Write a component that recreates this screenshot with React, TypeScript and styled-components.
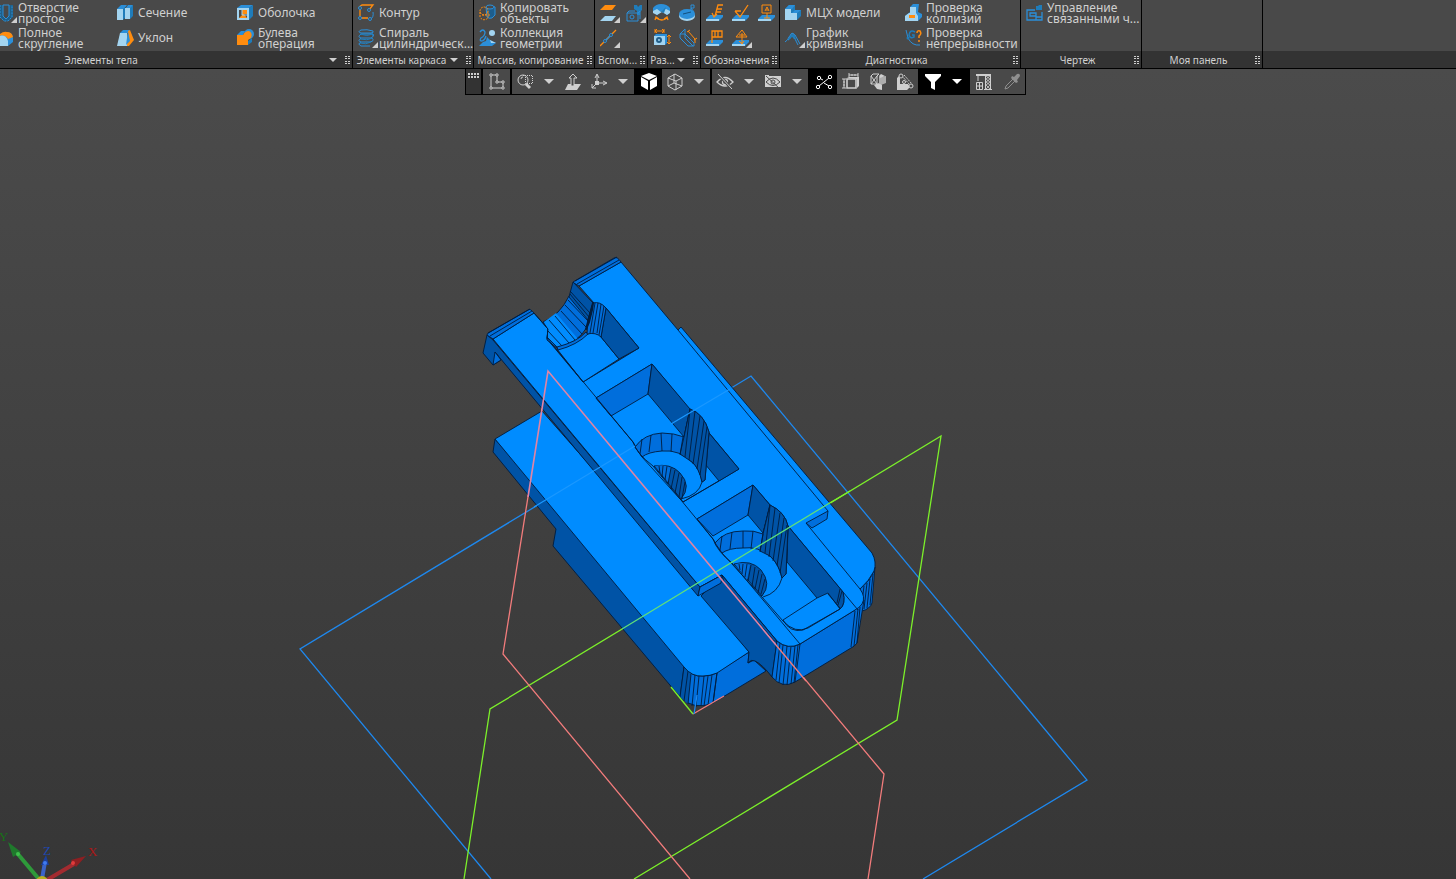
import React from "react";
import styled, { createGlobalStyle } from "styled-components";

const ORANGE = "#ff8c0f";
const BLUE = "#2b8fd9";
const DEEP = "#1f7cba";
const PALE = "#a3d4f0";
const LIGHT = "#cfcfcf";

const GlobalStyle = createGlobalStyle`
  *, *::before, *::after { box-sizing: border-box; }
  body {
    margin: 0;
    background: #383838;
    color: #d0d0d0;
    font-family: "Noto Sans", "Open Sans", sans-serif;
  }
  button { font: inherit; color: inherit; border: 0; padding: 0; background: none; }
  svg { display: block; }
`;

const Shell = styled.div`
  display: flex;
  flex-direction: column;
  min-height: 100vh;
  overflow: hidden;
`;

const Ribbon = styled.header`
  display: flex;
  background: linear-gradient(#494949 51px, #333333 51px);
  border-bottom: 1px solid #000;
`;

const Panel = styled.section<{ $width: number }>`
  display: flex;
  flex-direction: column;
  flex: none;
  width: ${(p) => p.$width}px;
  border-right: 1px solid #000;
  overflow: hidden;
`;

const Commands = styled.div<{ $columns: string; $alignEnd?: boolean }>`
  display: grid;
  grid-template-columns: ${(p) => p.$columns};
  grid-template-rows: 25px 25px;
  justify-content: ${(p) => (p.$alignEnd ? "end" : "start")};
  height: 51px;
  padding-left: ${(p) => (p.$alignEnd ? 0 : 5)}px;
`;

const Command = styled.button`
  display: flex;
  align-items: center;
  gap: 1px;
  min-width: 0;
  text-align: left;
  font-size: 12px;
  line-height: 11px;
  white-space: pre;
`;

const CommandIcon = styled.svg`
  flex: none;
  width: 20px;
  height: 20px;
`;

const PanelFooter = styled.footer`
  display: flex;
  align-items: center;
  height: 17px;
  padding-right: 2px;
`;

const PanelTitle = styled.span<{ $inset?: number }>`
  flex: 1;
  padding-top: 2px;
  padding-right: ${(p) => p.$inset ?? 0}px;
  text-align: center;
  font-size: 10px;
  line-height: 15px;
  white-space: nowrap;
`;

const Expand = styled.button`
  display: grid;
  place-items: center start;
  width: 16px;
  height: 17px;
`;

const FooterGrip = styled.svg`
  flex: none;
  width: 5px;
  height: 8px;
`;

const Viewport = styled.main`
  display: grid;
  flex: 1;
  background: linear-gradient(#4b4b4b, #363636);
`;

const Scene = styled.svg`
  grid-area: 1 / 1;
  width: 100%;
  height: calc(100vh - 69px);
`;

const Toolbar = styled.div`
  grid-area: 1 / 1;
  justify-self: center;
  align-self: start;
  display: flex;
  gap: 2px;
  margin-left: 35px;
  padding: 0 1px 1px;
  background: #000;
  z-index: 1;
`;

const Group = styled.div`
  display: flex;
  background: #494949;
`;

const Handle = styled.div`
  width: 15px;
  padding: 4px 2px;
  background: #333;
`;

const Tool = styled.button<{ $width?: number; $active?: boolean }>`
  display: grid;
  place-items: center;
  width: ${(p) => p.$width ?? 26}px;
  height: 25px;
  background: ${(p) => (p.$active ? "#000" : "transparent")};
  color: ${(p) => (p.$active ? "#fff" : LIGHT)};
`;

const Gizmo = styled.svg`
  grid-area: 1 / 1;
  align-self: end;
  justify-self: start;
  width: 110px;
  height: 59px;
  font: 13px "Liberation Serif", serif;
`;

const Corner = () => <path d="M14 20L20 14V20z" fill={LIGHT} />;

const Slab = () => (
  <>
    <path d="M0 18V16L4 12H17V14L13 18z" fill={BLUE} />
    <path d="M0 18V16H13V18z" fill={PALE} />
  </>
);

const icons: Record<string, React.ReactNode> = {
  hole: (
    <>
      <path d="M2 2H16V14L12 18H7L2 14z" fill="#1f5f88" />
      <path d="M6 2H12V13L9 16L6 13z" fill="#494949" stroke={BLUE} />
      <path d="M3 2V14L7 18H11L15 14V2" stroke={BLUE} fill="none" strokeDasharray="2 1" />
      <Corner />
    </>
  ),
  fullRound: (
    <>
      <path d="M2 9L9 4Q15 4 16 10V14L11 18H2z" fill={BLUE} />
      <path d="M2 7Q6 3 10 4Q15 4 16 9L11 11Q8 6 2 8z" fill={ORANGE} />
      <path d="M2 8Q9 6 11 13V18H2z" fill={PALE} />
    </>
  ),
  section: (
    <>
      <path d="M0 6L4 2H10L7 6zM8 6L11 2H16L14 6z" fill={BLUE} />
      <path d="M0 6H6V17H0zM8 5H13V16H8z" fill={PALE} />
      <path d="M6 6L8 4V15L6 17zM13 5L16 2V13L13 16z" fill={DEEP} />
    </>
  ),
  draft: (
    <>
      <path d="M3 5L6 2H13L11 5z" fill={BLUE} />
      <path d="M3 5H10L11 18H0z" fill={PALE} />
      <path d="M11 3L13 2L17 12L12 18H10z" fill={ORANGE} />
      <path d="M11 3L9 17L13 13z" fill={BLUE} />
    </>
  ),
  shell: (
    <>
      <path d="M0 5L4 2H16L12 5z" fill={BLUE} />
      <path d="M12 5L16 2V13L12 17z" fill={DEEP} />
      <path d="M0 5H12V17H0z" fill={PALE} />
      <path d="M2 7H10V15H2z" fill={ORANGE} />
      <path d="M2 7H5V12L2 15zM7 11H10V15z" fill="#494949" />
      <path d="M5 7V12H10" fill="none" stroke={PALE} />
    </>
  ),
  boolean: (
    <>
      <path d="M0 7L4 3H8L6 7z" fill={BLUE} />
      <circle cx="12" cy="6" r="5" fill={BLUE} />
      <path d="M0 7H6Q8 3 12 3Q16 5 14 10L11 12V17H0z" fill={ORANGE} />
      <path d="M11 13L15 10V14L11 17z" fill={DEEP} />
    </>
  ),
  contour: (
    <>
      <path d="M1 4L4 2H15L11 7M2 4V15H10" fill="none" stroke={ORANGE} strokeWidth="1.3" />
      <path d="M12 16Q16 15 15 9" fill="none" stroke={BLUE} />
      <g fill="#494949" stroke={BLUE}>
        <circle cx="2" cy="5" r="1.5" /><circle cx="11" cy="7" r="1.5" /><circle cx="2" cy="15" r="1.5" /><circle cx="12" cy="16" r="1.5" />
      </g>
    </>
  ),
  spiral: (
    <>
      <path d="M15 3Q9 1 3 2Q-1 4 3 5H13M15 8Q17 5 11 6H3Q-1 9 3 10H13Q17 8 14 6M3 10Q-1 13 3 14H12Q17 13 14 10M3 14Q-1 16 3 18H12M15 3Q16 5 13 5" fill="none" stroke={BLUE} />
      <path d="M2 6Q9 9 15 6M2 11Q9 13 15 10M2 15Q8 17 13 14" fill="none" stroke={DEEP} />
      <Corner />
    </>
  ),
  copyObjects: (
    <>
      <path d="M7 4Q11 1 16 4V12L13 15Q10 16 8 14z" fill="#1d5e8e" stroke={BLUE} />
      <ellipse cx="11" cy="4" rx="4" ry="2" fill="#494949" stroke={BLUE} />
      <circle cx="5" cy="8" r="4" fill="none" stroke={ORANGE} strokeDasharray="2 1" />
      <path d="M1 9V14Q4 19 9 15V8M3 12H11" fill="none" stroke={ORANGE} strokeDasharray="2 1" />
    </>
  ),
  collection: (
    <>
      <path d="M1 4Q4 0 6 4Q6 8 2 10Q0 13 3 13Q6 12 7 8" fill="none" stroke={BLUE} strokeWidth="1.3" />
      <circle cx="13" cy="5" r="3" fill={PALE} />
      <path d="M8 9L11 12L17 15L13 18H0L4 14L7 13z" fill={BLUE} />
      <path d="M11 12L17 15H12z" fill={PALE} />
    </>
  ),
  plane: (
    <>
      <path d="M5 2H16L12 7H0z" fill={ORANGE} />
      <path d="M5 13H16L12 18H0z" fill={PALE} />
      <Corner />
    </>
  ),
  component: (
    <>
      <path d="M8 2H11L12 4L14 2H16V7L14 9V12H11V8L8 6z" fill={DEEP} />
      <path d="M1 10H12V18H1zM1 10L3 8H9M12 10L14 8V16" fill="none" stroke={BLUE} />
      <circle cx="6" cy="14" r="2" fill="none" stroke={BLUE} />
      <Corner />
    </>
  ),
  axis: (
    <>
      <path d="M0 18L16 2" stroke={ORANGE} strokeWidth="1.3" />
      <path d="M5 13L11 7" stroke={BLUE} strokeWidth="1.3" />
      <circle cx="5" cy="13" r="1.5" fill="#494949" stroke={BLUE} />
      <circle cx="11" cy="7" r="1.5" fill="#494949" stroke={BLUE} />
      <Corner />
    </>
  ),
  angleSize: (
    <>
      <path d="M0 9V5Q3 1 8 1Q14 1 17 5V9L14 12L9 8L4 12z" fill={BLUE} />
      <path d="M0 8L4 6L8 9L13 6L17 8V10L14 12L9 9L4 12L0 10z" fill={PALE} />
      <path d="M8 9L13 4L11 10z" fill={DEEP} />
      <path d="M3 15Q9 19 14 15M2 17L3 14L6 16M15 17L14 14L11 16" fill="none" stroke={ORANGE} strokeWidth="1.3" />
    </>
  ),
  diskSize: (
    <>
      <ellipse cx="8" cy="13" rx="8" ry="5" fill={PALE} />
      <ellipse cx="8" cy="11" rx="8" ry="5" fill={BLUE} />
      <path d="M12 10V2H15V5H12L15 9" fill="none" stroke={BLUE} />
      <path d="M4 11L12 9" stroke="#124f7d" />
    </>
  ),
  linearSize: (
    <>
      <path d="M1 8H12V17H1z" fill={PALE} /><path d="M1 8L3 6H14V15L12 17V8z" fill={BLUE} />
      <circle cx="6" cy="12" r="3" fill="#225f8a" />
      <circle cx="6" cy="12" r="1" fill={PALE} />
      <path d="M2 3H11M2 1V5M11 1V5M4 1L2 3L4 5M9 1L11 3L9 5M16 7V16M14 9L16 7L18 9M14 14L16 16L18 14" fill="none" stroke={ORANGE} />
    </>
  ),
  chainSize: (
    <>
      <path d="M1 6H6L15 15V18H9L1 10zM6 6V10L14 18M1 6L6 1V6" fill="none" stroke={BLUE} />
      <path d="M9 3L16 11V15M8 4L11 2M15 12L18 10" fill="none" stroke={ORANGE} />
    </>
  ),
  base: (<><Slab /><path d="M17 2H12L9 13M11 6H16M10 9H15M6 10L8 14L11 11" fill="none" stroke={ORANGE} strokeWidth="1.3" /></>),
  roughness: (<><Slab /><path d="M3 8L8 14L16 2M3 8H9" fill="none" stroke={ORANGE} strokeWidth="1.3" /></>),
  datum: (<><Slab /><path d="M4 2H13V10H4zM9 10V15M6 15H12M7 8L9 4L11 8M8 7H10" fill="none" stroke={ORANGE} /></>),
  tolerance: (<><Slab /><path d="M6 15V3H16V9H6M9 3V9M12 3V9" fill="none" stroke={ORANGE} strokeWidth="1.3" /></>),
  mark: (<><Slab /><path d="M10 2L15 9H4zM10 5V15M7 13L10 16L12 13M7 7H13" fill="none" stroke={ORANGE} /><Corner /></>),
  mass: (
    <>
      <path d="M0 6L4 2H10V7H16V13L12 17H0z" fill={DEEP} />
      <path d="M0 6L4 2H10L7 6zM7 10L10 7H16L12 10z" fill={BLUE} />
      <path d="M0 6H6V10H12V17H0z" fill={PALE} />
    </>
  ),
  curvature: (
    <>
      <path d="M0 14Q3 12 4 9L7 5L10 7L15 16M3 12L7 8L10 11L13 17M4 9L5 11M6 6V9M8 5V9M10 7L9 11" fill="none" stroke={BLUE} />
      <path d="M4 10L7 6L10 8L12 14L10 11L7 9L3 13z" fill={DEEP} />
      <Corner />
    </>
  ),
  collision: (
    <>
      <path d="M5 4L8 1H14L13 9L17 11V14L13 18H0V13L5 9z" fill={BLUE} />
      <path d="M5 4H11V10H5zM0 13L4 10H11L13 13V18H0z" fill={PALE} />
      <path d="M4 12H10V15H4z" fill={ORANGE} />
    </>
  ),
  continuity: (
    <>
      <path d="M1 2L3 10Q7 18 15 17" fill="none" stroke={BLUE} />
      <path d="M10 4Q5 1 4 7Q5 11 9 9V7H7" fill="none" stroke={DEEP} strokeWidth="1.5" />
      <path d="M12 5Q12 2 15 3Q17 6 14 8V10M14 12V14" fill="none" stroke={ORANGE} strokeWidth="1.5" />
      <circle cx="3" cy="10" r="1.5" fill={DEEP} />
    </>
  ),
  drawing: (
    <>
      <path d="M9 7H1V17H16V9M4 10H10V13H4zM10 17V14H16" fill="none" stroke={BLUE} strokeWidth="1.3" />
      <path d="M10 3H12L13 2H16V7H10z" fill={DEEP} />
    </>
  ),
};

const tools: Record<string, React.ReactNode> = {
  sketch: (
    <>
      <path d="M4 3H10V10H16V16H4z" fill="none" stroke="currentColor" />
      <g fill="#494949" stroke="currentColor"><circle cx="4" cy="3" r="1.2" /><circle cx="10" cy="3" r="1.2" /><circle cx="10" cy="10" r="1.2" /><circle cx="16" cy="10" r="1.2" /><circle cx="4" cy="16" r="1.2" /><circle cx="16" cy="16" r="1.2" /></g>
    </>
  ),
  zoom: (
    <>
      <circle cx="8" cy="8" r="5" fill="none" stroke="currentColor" />
      <path d="M11 12L15 16" stroke="currentColor" strokeWidth="3" />
      <path d="M8 3.5H17.5V11.5H10.5V3" fill="none" stroke="currentColor" strokeDasharray="1 1" />
      <path d="M6 7Q6 5 8 5" fill="none" stroke="currentColor" />
    </>
  ),
  orient: (<><path d="M5 12H18L14 18H2z" fill="currentColor" /><path d="M10 2L14 6H11V14H8V6H6z" fill="#494949" stroke="currentColor" /></>),
  axes: (<><path d="M8 10V3M8 11H17M8 11L3 16M6 6L8 2L10 6M14 9L18 11L14 13M3 12V16H7" fill="none" stroke="currentColor" /><rect x="6" y="9" width="4" height="4" fill="currentColor" /></>),
  solid: (<><path d="M10 1L18 4L10 8L2 4z" fill="#fff" /><path d="M2 5L9 9V18L2 14zM18 5L11 9V18L18 14z" fill="#fff" /></>),
  wire: (<path d="M10 2L17 6V14L10 18L3 14V6zM3 6L11 9L17 6M11 9V18M9 2V11L3 14M9 11L17 14" fill="none" stroke="currentColor" />),
  hide: (
    <>
      <path d="M2 10Q10 1 18 10Q10 18 2 10z" fill="none" stroke="currentColor" strokeWidth="1.3" />
      <circle cx="10" cy="10" r="2.5" fill="none" stroke="currentColor" strokeWidth="1.3" />
      <path d="M3 2L17 17" stroke="#494949" strokeWidth="3" /><path d="M3 2L17 17" stroke="currentColor" />
    </>
  ),
  hideAll: (
    <>
      <path d="M2 4V3H6V4H18V15H2z" fill="currentColor" />
      <path d="M3 10Q10 2 17 10Q10 17 3 10z" fill="currentColor" stroke="#494949" />
      <circle cx="10" cy="10" r="2" fill="none" stroke="#494949" />
      <path d="M3 4L17 17" stroke="#494949" />
    </>
  ),
  points: (
    <>
      <path d="M5 14L15 6M7 7L9 8M10 11L15 14" fill="none" stroke="currentColor" />
      <g fill="#000" stroke="currentColor"><circle cx="5" cy="6" r="1.7" /><circle cx="4" cy="15" r="1.7" /><circle cx="16" cy="5" r="1.7" /><circle cx="16" cy="15" r="1.7" /></g>
    </>
  ),
  dims: (<><path d="M6 7H15V16H6z" fill="none" stroke="currentColor" strokeWidth="1.6" /><path d="M8 5V1M17 5V1M8 3H17M11 2V4M14 2V4M5 7H1M5 16H1M3 7V16M2 10H4M2 13H4" fill="none" stroke="currentColor" /><path d="M6 6L8 5H18V14L16 16V7z" fill="currentColor" /></>),
  surfaces: (
    <>
      <path d="M3 4L5 2H11L9 4V12H3zM3 12L9 4M9 12L3 4" fill="none" stroke="currentColor" />
      <path d="M11 5L18 4V11L13 13L11 11z" fill="currentColor" opacity=".75" />
      <path d="M6 13L11 11L14 13V18L9 17z" fill="currentColor" />
      <path d="M11 4L13 2L17 4L12 6z" fill="currentColor" />
    </>
  ),
  threads: (
    <>
      <path d="M2 6L5 3V12H13L15 15L12 18H2z" fill="currentColor" />
      <path d="M7 4L15 13M9 3L17 12" fill="none" stroke="currentColor" strokeDasharray="2 1" />
      <circle cx="6" cy="4" r="2" fill="#494949" stroke="currentColor" />
      <circle cx="16" cy="14" r="2" fill="#494949" stroke="currentColor" />
      <circle cx="9" cy="10" r="1.5" fill="#494949" stroke="currentColor" />
    </>
  ),
  filter: (<path d="M2 2H18V4L12 10V18L8 16V10L2 4z" fill="#fff" />),
  crane: (
    <>
      <path d="M2 2H17V4H2zM11 4H12V17H11zM16 4H17V17H16zM10 17H18V18H10z" fill="currentColor" />
      <path d="M4 4V9M2.5 10.5H8.5V17.5H2.5zM5.5 10V18M2 14H9" fill="none" stroke="currentColor" />
      <path d="M12 4L16 7L12 10L16 13L12 17M16 4L12 7L16 10L12 13L16 17" fill="none" stroke="currentColor" strokeWidth="0.8" />
    </>
  ),
  dropper: (<><path d="M12 5L15 2Q18 1 18 4L15 8L16 10L14 11L9 6L10 4z" fill="#8f8f8f" /><path d="M11 7L4 14L3 17L6 16L13 9" fill="none" stroke="#8f8f8f" /></>),
};

const Caret = () => (
  <svg width="10" height="5" viewBox="0 0 10 5" aria-hidden="true"><path d="M0 0H10L5 5z" fill="currentColor" /></svg>
);

type Item = { icon: string; label?: string; name?: string };

const Cmd = ({ icon, label, name }: Item) => (
  <Command type="button" aria-label={name}>
    <CommandIcon viewBox="0 0 20 20" aria-hidden="true">{icons[icon]}</CommandIcon>
    {label && <span>{label}</span>}
  </Command>
);

type PanelData = {
  title: string; width: number; columns: string; items: Item[];
  expand?: boolean; alignEnd?: boolean; inset?: number;
};

const panels: PanelData[] = [
  {
    title: "Элементы тела", width: 353, columns: "120px 120px 115px", alignEnd: true, expand: true, inset: 127,
    items: [
      { icon: "hole", label: "Отверстие\nпростое" }, { icon: "section", label: "Сечение" }, { icon: "shell", label: "Оболочка" },
      { icon: "fullRound", label: "Полное\nскругление" }, { icon: "draft", label: "Уклон" }, { icon: "boolean", label: "Булева\nоперация" },
    ],
  },
  {
    title: "Элементы каркаса", width: 121, columns: "115px", expand: true,
    items: [{ icon: "contour", label: "Контур" }, { icon: "spiral", label: "Спираль\nцилиндрическ..." }],
  },
  {
    title: "Массив, копирование", width: 121, columns: "115px",
    items: [{ icon: "copyObjects", label: "Копировать\nобъекты" }, { icon: "collection", label: "Коллекция\nгеометрии" }],
  },
  {
    title: "Вспом...", width: 53, columns: "26px 21px",
    items: [{ icon: "plane", name: "Плоскость" }, { icon: "component", name: "Компонент" }, { icon: "axis", name: "Ось" }],
  },
  {
    title: "Раз...", width: 53, columns: "26px 21px", expand: true,
    items: [
      { icon: "angleSize", name: "Угловой размер" }, { icon: "diskSize", name: "Радиальный размер" },
      { icon: "linearSize", name: "Линейный размер" }, { icon: "chainSize", name: "Размер цепью" },
    ],
  },
  {
    title: "Обозначения", width: 79, columns: "26px 26px 21px",
    items: [
      { icon: "base", name: "Выноска" }, { icon: "roughness", name: "Шероховатость" }, { icon: "datum", name: "База" },
      { icon: "tolerance", name: "Допуск формы" }, { icon: "mark", name: "Клеймо" },
    ],
  },
  {
    title: "Диагностика", width: 241, columns: "120px 115px",
    items: [
      { icon: "mass", label: "МЦХ модели" }, { icon: "collision", label: "Проверка\nколлизий" },
      { icon: "curvature", label: "График\nкривизны" }, { icon: "continuity", label: "Проверка\nнепрерывности" },
    ],
  },
  { title: "Чертеж", width: 121, columns: "115px", items: [{ icon: "drawing", label: "Управление\nсвязанными ч..." }] },
  { title: "Моя панель", width: 121, columns: "115px", items: [] },
];

const T = ({ icon, name, width, active }: { icon: string; name: string; width?: number; active?: boolean }) => (
  <Tool type="button" aria-label={name} $width={width} $active={active}>
    <svg width="20" height="20" viewBox="0 0 20 20" aria-hidden="true">{tools[icon]}</svg>
  </Tool>
);

const More = ({ active }: { active?: boolean }) => (
  <Tool type="button" aria-label="Ещё" $width={22} $active={active}><Caret /></Tool>
);

const TOP = "#008cff";
const SIDE = "#006edc";
const DARK = "#0053a6";

const Model = () => (
  <g stroke="#001c3d" strokeWidth="0.9" strokeLinejoin="round">
    {/* lower plate */}
    <path fill={DARK} d="M495 439L493 452L556 529L553 546L680 697L690 690L690 660z" />
    <path fill={SIDE} d="M716 673L749 652L748 663L754 660L766 671L713 703z" />
    <path fill={SIDE} d="M684 667Q692 677 703 676Q710 676 717 673L713 703Q694 711 680 697z" />
    <path fill={DARK} stroke="none" d="M684 667L691 674L688 704L680 697z" />
    <path fill="none" d="M684 667L680 697M688 671L684 701M691 674L688 704M695 675L692 706M699 676L696 707M704 676L701 706M708 676L704 706M712 675L708 705M717 673L713 703" />
    <path fill={TOP} d="M542 411L495 439L684 667Q692 677 703 676Q710 676 717 673L749 652L700 590z" />
    {/* right plate */}
    <path fill={SIDE} d="M860 589Q873 578 875 567L872 603Q870 609 862 611L856 612z" />
    <path fill="none" d="M864 586L861 610M867 583L864 609M870 579L867 608M873 574L870 605" />
    {/* body sides */}
    <path fill={DARK} d="M722 575L777 641L772 677Q762 664 755 661Q751 659 748 663L749 652L701 596z" />
    <path fill={SIDE} d="M800 644L855 610L864 600L857 643Q854 647 851 648L795 682L788 660z" />
    <path fill={SIDE} d="M777 641Q788 650 800 644L795 682Q782 689 772 677z" />
    <path fill="none" d="M780 643L776 680M783 645L779 683M787 646L783 685M791 646L787 685M795 646L791 684M798 645L794 683M855 611L851 647M858 609L854 646M860 607L857 643" />
    <path fill={DARK} d="M493 340L487 335L483 353L493 365L501 360L495 352L698 596L700 587z" />
    <path fill={SIDE} d="M501 360L495 352L493 365z" />
    {/* top face */}
    <path fill={TOP} d="M579 286L621 262L678 330L681 327L872 553Q877 562 874 571Q869 581 860 589Q866 597 862 604Q859 608 855 610L800 644Q788 650 777 641L722 575L700 587L493 339L534 313L548 329L547 339L583 382L639 348L606 308L594 303z" />
    <path fill={SIDE} d="M828 511L827 519L812 528L806 523z" />
    <path fill="none" d="M678 330L828 511M806 523L860 589M843 592L858 610M722 575L700 587" />
    <path fill={SIDE} d="M700 587L698 596L721 583L722 575z" />
    <path fill={DARK} d="M722 575L777 641L774 641L724 582z" />
    {/* rounded arm ends */}
    <path fill={SIDE} d="M487 335Q487 333 490 332L528 310Q530 308 534 313L493 339z" />
    <path fill="none" d="M488 333L530 309M490 336L532 311" />
    <path fill={SIDE} d="M574 283L573 282L614 258Q617 256 621 262L579 286z" />
    <path fill="none" d="M575 281L617 257M577 284L619 260" />
    {/* channel between the arms */}
    <path fill={SIDE} d="M543 322Q560 315 569 296L590 316L587 327Q578 343 557 348L547 340L548 329z" />
    <path fill={TOP} stroke="none" d="M544 322L556 313L578 339L557 347L548 339L548 329z" />
    <path fill="none" d="M549 320L569 343M555 316L575 340M561 311L582 334M565 305L586 327M568 300L588 321M548 331L562 346M547 337L557 347" />
    <path fill={DARK} d="M573 282L593 303L588 320L569 297z" />
    <path fill="none" d="M570 291L590 313M570 294L589 317" />
    <path fill={TOP} d="M557 349Q577 343 585 335Q596 330 601 337L619 359L583 382z" />
    <path fill={SIDE} d="M557 347Q577 342 586 332L588 334Q577 345 558 350z" />
    <path fill={DARK} d="M606 308L639 348L619 359L601 337z" />
    <path fill={SIDE} d="M593 303Q600 301 606 308L601 337Q596 332 587 334L588 320z" />
    <path fill="none" d="M595 303L590 333M598 303L593 333M601 304L597 333M604 306L599 335" />
    <path d="M593 303L588 322L586 329L589 322L592 310z" strokeWidth="2" />
    {/* first pocket */}
    <path fill={TOP} d="M596 398L652 364L739 469L683 502L680 499L642 457L633 442z" />
    <path fill={SIDE} d="M596 398L652 364L648 394L611 416z" />
    <path fill={DARK} d="M652 364L690 409L684 437L648 394z" />
    <path fill={DARK} d="M709 433L739 469L719 481L705 464z" />
    <path fill={SIDE} d="M635 447Q644 434 662 433Q674 433 684 437L690 409Q704 414 709 432L705 480L702 482Q700 470 694 464Q680 449 662 451Q648 452 642 457z" />
    <path fill={DARK} d="M684 437L690 409Q704 414 709 432L705 480L702 482Q699 468 692 462L680 454z" />
    <path fill="none" d="M642 439L640 454M651 435L649 452M661 433L662 451M672 434L671 452M683 437L680 455M690 410L685 457M695 411L689 460M700 416L693 464M704 421L697 469M707 427L700 475" />
    <path fill={DARK} d="M654 466Q671 463 680 473Q692 486 681 499z" />
    <path fill={SIDE} stroke="none" d="M655 466Q665 464 671 468L668 482z" />
    <path fill="none" d="M659 466L660 473M663 466L662 477M667 466L665 480M671 468L668 484M675 470L671 489M679 473L675 493M682 477L679 497M685 482L682 498M702 482Q699 495 681 499L683 502L719 481" />
    {/* second pocket */}
    <path fill={TOP} d="M697 519L753 485L788 526L843 592Q846 604 840 609L808 628Q795 634 783 621L762 597L722 553L713 539z" />
    <path fill={SIDE} d="M697 519L753 485L748 515L713 536z" />
    <path fill={DARK} d="M753 485L770 505L763 533L748 515z" />
    <path fill={DARK} d="M788 526L843 592Q846 604 840 609L828 593L817 598L787 562z" />
    <path fill={SIDE} d="M715 543Q724 531 743 531Q754 530 763 534L770 505Q785 512 788 526L786 574L782 578Q779 564 770 556Q758 546 743 548Q729 548 722 553z" />
    <path fill={DARK} d="M763 534L770 505Q785 512 788 526L786 574L782 578Q779 564 770 556L760 551z" />
    <path fill="none" d="M722 536L720 550M732 532L730 549M743 531L743 548M753 531L751 549M763 534L760 552M770 506L765 553M775 508L769 557M780 513L773 561M784 518L777 566M787 525L780 573" />
    <path fill={DARK} d="M734 564Q751 559 761 570Q772 584 762 596z" />
    <path fill={SIDE} stroke="none" d="M735 564Q745 562 750 565L747 580z" />
    <path fill="none" d="M739 564L740 570M743 564L742 574M747 564L745 577M751 565L748 581M755 567L752 586M759 570L755 589M762 574L758 593M765 579L761 594M782 578Q778 593 763 597" />
    <path fill="none" d="M817 598L783 620M783 620Q790 633 803 630L840 609M828 594L840 608M842 591L838 605M840 589L837 603" />
    {/* long inner edges */}
    <path fill="none" d="M534 313L548 329L547 338L633 442Q636 453 653 466L713 539Q717 551 732 563L800 644" />
  </g>
);

const Workspace = () => (
  <Scene viewBox="0 69 1456 810" preserveAspectRatio="xMidYMid slice" role="img" aria-label="3D-модель">
    <g fill="none" strokeWidth="1.3">
      <path stroke="#1e88ee" d="M491 879L300 649L751 376L1087 780L923 879" />
      <path stroke="#7cf02a" d="M464 879L490 709L941 436L897 720L634 879" />
      <path stroke="#f27c7c" d="M690 879L503 654L548 371L884 774L868 879" />
    </g>
    <Model />
    <g fill="none" strokeWidth="1.3">
      <path stroke="#1a98ff" d="M730 389L671 424M635 446L534 507" />
      <path stroke="#5fe07a" d="M622 629L828 504" />
      <path stroke="#7cf02a" d="M828 504L850 491" />
      <path stroke="#e084a4" strokeWidth="1.6" d="M528 497L548 371L776 645" />
      <path stroke="#f27c7c" d="M776 645L806 681M693 714L724 696" />
      <path stroke="#7cf02a" d="M671 687L693 714" />
      <path stroke="#1e88ee" d="M694 714L697 695" />
    </g>
  </Scene>
);

export default function App() {
  return (
    <Shell>
      <GlobalStyle />
      <Ribbon>
        {panels.map((p) => (
          <Panel key={p.title} $width={p.width}>
            <Commands $columns={p.columns} $alignEnd={p.alignEnd}>
              {p.items.map((it) => <Cmd key={it.icon} {...it} />)}
            </Commands>
            <PanelFooter>
              <PanelTitle $inset={p.inset}>{p.title}</PanelTitle>
              {p.expand && <Expand type="button" aria-label="Развернуть"><svg width="8" height="4" viewBox="0 0 8 4"><path d="M0 0H8L4 4z" fill={LIGHT} /></svg></Expand>}
              <FooterGrip viewBox="0 0 5 8" aria-hidden="true">
                <path d="M0 0.5H5M0 2.5H5M0 5.5H5M0 7.5H5" stroke={LIGHT} strokeDasharray="2 1" />
              </FooterGrip>
            </PanelFooter>
          </Panel>
        ))}
      </Ribbon>
      <Viewport>
        <Workspace />
        <Toolbar role="toolbar" aria-label="Вид">
          <Handle>
            <svg width="11" height="5" viewBox="0 0 11 5" aria-hidden="true">
              <path d="M0 1H11M0 4H11" stroke={LIGHT} strokeWidth="2" strokeDasharray="2 1" />
            </svg>
          </Handle>
          <Group><T icon="sketch" name="Эскиз" width={27} /></Group>
          <Group>
            <T icon="zoom" name="Масштаб" /><More />
            <T icon="orient" name="Нормально к" />
            <T icon="axes" name="Ориентация" /><More />
          </Group>
          <Group><T icon="solid" name="Полутоновое" active /><T icon="wire" name="Каркас" /><More /></Group>
          <Group><T icon="hide" name="Скрыть" /><More /><T icon="hideAll" name="Скрыть объекты" /><More /></Group>
          <Group>
            <T icon="points" name="Точки" width={27} active /><T icon="dims" name="Размеры" width={27} />
            <T icon="surfaces" name="Поверхности" width={27} /><T icon="threads" name="Резьбы" width={27} />
          </Group>
          <Group><T icon="filter" name="Фильтр" active /><More active /></Group>
          <Group><T icon="crane" name="Сборка" width={28} /><T icon="dropper" name="Цвет" width={27} /></Group>
        </Toolbar>
        <Gizmo viewBox="0 0 110 59" aria-label="Оси">
          <path d="M38 58L17 33" stroke="#2e9a3a" strokeWidth="4" />
          <path d="M8 22L21 32L13 37z" fill="#1f7a2c" />
          <circle cx="18" cy="34" r="2" fill="#3fc04c" />
          <path d="M47 60L74 44" stroke="#a32b30" strokeWidth="4" />
          <path d="M86 36L76 47L71 40z" fill="#8f1f22" />
          <circle cx="73" cy="43" r="2" fill="#e03a3a" />
          <path d="M42 59L45 42" stroke="#3a63c8" strokeWidth="4" />
          <path d="M46 35L49 45L41 45z" fill="#1c3f9c" />
          <circle cx="45" cy="43" r="2" fill="#3f7af0" />
          <circle cx="42" cy="62" r="6" fill="#b8b020" />
          <text x="-1" y="21" fill="#187018">Y</text>
          <text x="43" y="35" fill="#2048b0">Z</text>
          <text x="88" y="36" fill="#a81818">X</text>
        </Gizmo>
      </Viewport>
    </Shell>
  );
}
